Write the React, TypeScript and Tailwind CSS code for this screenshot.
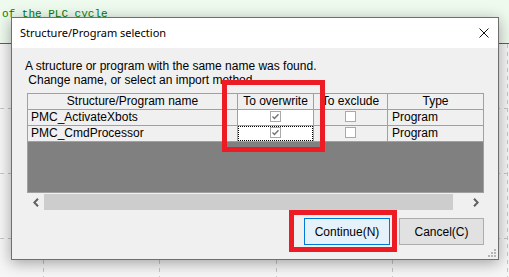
import React from "react";

const rows = [
  { name: "PMC_ActivateXbots", focus: false },
  { name: "PMC_CmdProcessor", focus: true },
];

function CheckBox({ checked }: { checked?: boolean }) {
  return (
    <div className="mt-[1px] flex h-[11px] w-[11px] items-center justify-center border border-[#a9a9a9] bg-white">
      {checked && (
        <svg width="9" height="9" viewBox="0 0 9 9">
          <path d="M1.5 4.5 L3.5 6.5 L7.5 2.2" fill="none" stroke="#6f6f6f" strokeWidth="1.3" />
        </svg>
      )}
    </div>
  );
}

export default function App() {
  return (
    <div className="relative flex h-[277px] w-[509px] flex-col overflow-hidden font-['Liberation_Sans',Arial,sans-serif] text-[12px] text-black">
      {/* editor behind the dialog */}
      <div className="h-[43px] bg-[#effaef] pl-[2px] pt-[8px] font-['Liberation_Mono',monospace] text-[11px] leading-[13px] text-[#008000]">
        of the PLC cycle
      </div>
      <div className="h-px bg-[#5f5f5f]" />
      <div className="relative flex-1 bg-[#f6f6f6]">
        <svg className="absolute inset-0" width="509" height="233">
          {[43.5, 159.5, 276.5, 392.5, 507.5].map((x) => (
            <line key={x} x1={x} y1="0" x2={x} y2="233" stroke="#c6c6c6" strokeDasharray="4 4" />
          ))}
          {[64.5, 129.5, 194.5].map((y) => (
            <line key={y} x1="0" y1={y} x2="509" y2={y} stroke="#c6c6c6" strokeDasharray="4 4" />
          ))}
        </svg>
      </div>

      {/* dialog window */}
      <div className="absolute left-[11px] top-[17px] flex w-[488px] flex-col border border-[#6e6e6e] bg-[#f0f0f0] shadow-[0_3px_14px_rgba(0,0,0,0.35)]">
        <div className="flex h-[30px] items-center justify-between bg-white pl-[8px] pr-[9px] font-['Noto_Sans',sans-serif] text-[11px]">
          <span>Structure/Program selection</span>
          <svg width="10" height="10" viewBox="0 0 10 10">
            <path d="M0.5 0.5 L9.5 9.5 M9.5 0.5 L0.5 9.5" stroke="#111" strokeWidth="1" />
          </svg>
        </div>

        <div className="flex flex-col pb-[14px] pt-[11px]">
          <div className="pl-[13px] leading-[14px] whitespace-pre">
            <div>A structure or program with the same name was found.</div>
            <div> Change name, or select an import method.</div>
          </div>

          {/* grid */}
          <div className="ml-[15px] mt-[6px] flex h-[100px] w-[457px] flex-col border border-[#a0a0a0] bg-[#808080]">
            <div className="flex h-[16px] border-b border-[#a0a0a0] bg-[#f0f0f0] leading-[15px]">
              <div className="w-[210px] border-r border-[#a0a0a0] text-center">Structure/Program name</div>
              <div className="w-[76px] border-r border-[#a0a0a0] text-center">To overwrite</div>
              <div className="w-[74px] overflow-hidden whitespace-nowrap border-r border-[#a0a0a0] text-center">To exclude</div>
              <div className="flex-1 text-center">Type</div>
            </div>
            {rows.map((r) => (
              <div key={r.name} className="flex h-[16px] border-b border-[#a0a0a0] bg-[#f0f0f0] leading-[15px]">
                <div className="w-[210px] border-r border-[#a0a0a0] pl-[3px]">{r.name}</div>
                <div className="w-[76px] border-r border-[#a0a0a0] bg-white">
                  <div
                    className={`flex h-full justify-center ${r.focus ? "border border-dotted border-black" : "border border-transparent"}`}
                  >
                    <div className="-mt-px">
                      <CheckBox checked />
                    </div>
                  </div>
                </div>
                <div className="flex w-[74px] justify-center border-r border-[#a0a0a0]">
                  <CheckBox />
                </div>
                <div className="flex-1 pl-[4px]">Program</div>
              </div>
            ))}
          </div>

          {/* horizontal scrollbar */}
          <div className="ml-[15px] mt-px flex h-[16px] w-[457px] items-center">
            <div className="flex w-[17px] items-center justify-center">
              <svg width="6" height="9" viewBox="0 0 6 9">
                <path d="M5 0.8 L1.3 4.5 L5 8.2" fill="none" stroke="#606060" strokeWidth="2" />
              </svg>
            </div>
            <div className="h-[16px] w-[409px] bg-[#cdcdcd]" />
            <div className="flex-1" />
            <div className="flex w-[17px] items-center justify-center">
              <svg width="6" height="9" viewBox="0 0 6 9">
                <path d="M1 0.8 L4.7 4.5 L1 8.2" fill="none" stroke="#606060" strokeWidth="2" />
              </svg>
            </div>
          </div>

          {/* buttons */}
          <div className="mr-[14px] mt-[8px] flex justify-end gap-[9px]">
            <div className="flex h-[27px] w-[86px] items-center justify-center border border-[#0078d7] bg-[#e5f1fb]">
              Continue(N)
            </div>
            <div className="flex h-[27px] w-[85px] items-center justify-center border border-[#adadad] bg-[#e1e1e1]">
              Cancel(C)
            </div>
          </div>
        </div>

        {/* size grip */}
        <svg className="absolute bottom-[2px] right-[2px]" width="8" height="8" viewBox="0 0 8 8">
          <rect x="6" y="0" width="2" height="2" fill="#b5b5b5" />
          <rect x="3" y="3" width="2" height="2" fill="#b5b5b5" />
          <rect x="6" y="3" width="2" height="2" fill="#b5b5b5" />
          <rect x="0" y="6" width="2" height="2" fill="#b5b5b5" />
          <rect x="3" y="6" width="2" height="2" fill="#b5b5b5" />
          <rect x="6" y="6" width="2" height="2" fill="#b5b5b5" />
        </svg>
      </div>

      {/* red highlight boxes */}
      <div className="absolute left-[222px] top-[80px] h-[72px] w-[103px] border-[5px] border-[#ed1c24]" />
      <div className="absolute left-[289px] top-[210px] h-[42px] w-[108px] border-[5px] border-[#ed1c24]" />
    </div>
  );
}
